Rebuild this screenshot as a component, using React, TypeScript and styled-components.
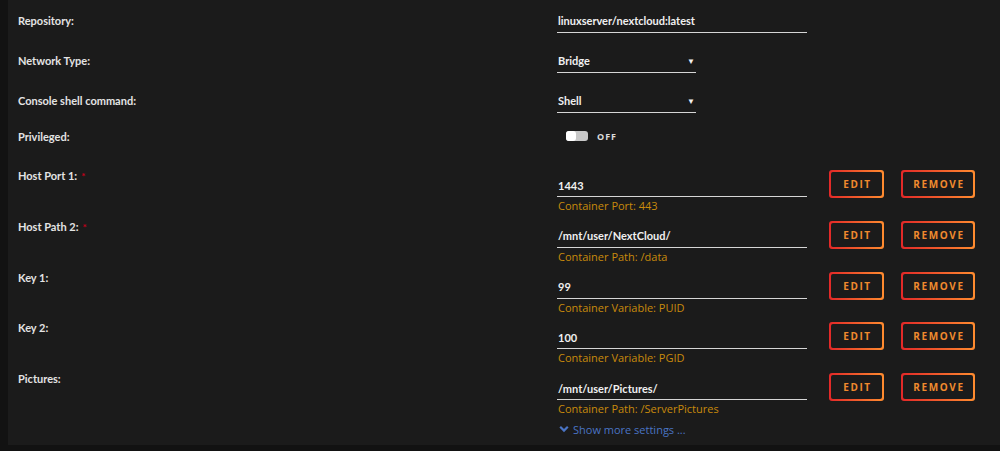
import React from 'react';
import styled, { createGlobalStyle } from 'styled-components';

type ConfigItem = {
  label: string;
  required?: boolean;
  value: string;
  caption: string;
};

const configs: ConfigItem[] = [
  { label: 'Host Port 1:', required: true, value: '1443', caption: 'Container Port: 443' },
  { label: 'Host Path 2:', required: true, value: '/mnt/user/NextCloud/', caption: 'Container Path: /data' },
  { label: 'Key 1:', value: '99', caption: 'Container Variable: PUID' },
  { label: 'Key 2:', value: '100', caption: 'Container Variable: PGID' },
  { label: 'Pictures:', value: '/mnt/user/Pictures/', caption: 'Container Path: /ServerPictures' },
];

const GlobalStyle = createGlobalStyle`
  body {
    margin: 0;
    background: #121212;
    font-family: "Open Sans", "Liberation Sans", sans-serif;
  }
`;

const App: React.FC = () => {
  return (
    <>
      <GlobalStyle />
      <Page>
        <Panel>
          <SimpleRow>
            <Label>Repository:</Label>
            <Field $width={250}>linuxserver/nextcloud:latest</Field>
          </SimpleRow>
          <SimpleRow>
            <Label>Network Type:</Label>
            <Field $width={139}>
              Bridge
              <Caret>▼</Caret>
            </Field>
          </SimpleRow>
          <SimpleRow>
            <Label>Console shell command:</Label>
            <Field $width={139}>
              Shell
              <Caret>▼</Caret>
            </Field>
          </SimpleRow>
          <SwitchRow>
            <Label>Privileged:</Label>
            <SwitchWrap>
              <Track>
                <Knob />
              </Track>
              <SwitchText>OFF</SwitchText>
            </SwitchWrap>
          </SwitchRow>

          <ConfigList>
            {configs.map((c) => (
              <ConfigRow key={c.label}>
                <ConfigLabel>
                  {c.label}
                  {c.required && <Required>*</Required>}
                </ConfigLabel>
                <ConfigBody>
                  <InputBlock>
                    <Field $width={250}>{c.value}</Field>
                    <Caption>{c.caption}</Caption>
                  </InputBlock>
                  <Buttons>
                    <OutlineButton $width={55}>
                      <span>EDIT</span>
                    </OutlineButton>
                    <OutlineButton $width={74}>
                      <span>REMOVE</span>
                    </OutlineButton>
                  </Buttons>
                </ConfigBody>
              </ConfigRow>
            ))}
          </ConfigList>

          <MoreRow>
            <span />
            <MoreLink>
              <svg width="10" height="8" viewBox="0 0 10 8">
                <path d="M1.2 1.8 L5 5.6 L8.8 1.8" fill="none" stroke="#4a74c4" strokeWidth="2.2" />
              </svg>
              Show more settings ...
            </MoreLink>
          </MoreRow>
        </Panel>
      </Page>
    </>
  );
};

export default App;

const Page = styled.div`
  width: 1000px;
  height: 451px;
  padding-left: 8px;
  box-sizing: border-box;
  overflow: hidden;
`;

const Panel = styled.div`
  height: 445px;
  background: #1b1b1b;
  padding-left: 10px;
  box-sizing: border-box;
`;

const SimpleRow = styled.div`
  display: grid;
  grid-template-columns: 539px 1fr;
  align-items: center;
  height: 40px;
`;

const SwitchRow = styled(SimpleRow)`
  height: 36px;
  margin-top: -2px;
`;

const Label = styled.div`
  font-family: Lato, "Open Sans", sans-serif;
  font-size: 11px;
  font-weight: 700;
  color: #e4e4e4;
`;

const Field = styled.div<{ $width: number }>`
  width: ${(p) => p.$width}px;
  height: 24px;
  box-sizing: border-box;
  display: flex;
  align-items: center;
  justify-content: space-between;
  padding-left: 1px;
  padding-top: 1px;
  margin-top: 1px;
  border-bottom: 1px solid #d6d6d6;
  font-family: Lato, "Open Sans", sans-serif;
  font-size: 11px;
  font-weight: 700;
  color: #f0f0f0;
`;

const Caret = styled.span`
  font-size: 8px;
  color: #f0f0f0;
  padding-right: 1px;
`;

const SwitchWrap = styled.div`
  display: flex;
  align-items: center;
  gap: 9px;
  padding-left: 9px;
`;

const Track = styled.div`
  width: 22px;
  height: 10px;
  border-radius: 3px;
  background: #c8c8c8;
  display: flex;
  align-items: center;
`;

const Knob = styled.div`
  width: 10px;
  height: 10px;
  border-radius: 3px;
  background: #ffffff;
`;

const SwitchText = styled.span`
  font-size: 9px;
  font-weight: 700;
  letter-spacing: 1px;
  color: #dcdcdc;
`;

const ConfigList = styled.div`
  padding-top: 10px;
`;

const ConfigRow = styled.div`
  display: grid;
  grid-template-columns: 539px 1fr;
  height: 50.75px;
`;

const ConfigLabel = styled(Label)`
  padding-top: 5px;
`;

const Required = styled.span`
  color: #c2001a;
  margin-left: 4px;
  font-size: 10px;
`;

const ConfigBody = styled.div`
  display: flex;
  align-items: flex-start;
  gap: 22px;
`;

const InputBlock = styled.div`
  display: flex;
  flex-direction: column;
  padding-top: 8px;
`;

const Caption = styled.div`
  font-size: 11px;
  color: #c88a0b;
  padding-left: 1px;
  margin-top: 1px;
`;

const Buttons = styled.div`
  display: flex;
  gap: 17px;
  padding-top: 6px;
`;

const OutlineButton = styled.div<{ $width: number }>`
  width: ${(p) => p.$width}px;
  height: 28px;
  box-sizing: border-box;
  padding: 2px;
  border-radius: 3px;
  background: linear-gradient(90deg, #e22828, #ff8c2f);
  display: flex;

  span {
    flex: 1;
    display: flex;
    align-items: center;
    justify-content: center;
    border-radius: 2px;
    background: #1b1b1b;
    font-size: 10px;
    font-weight: 700;
    letter-spacing: 1.6px;
    padding-left: 2px;
    color: #f08a2e;
  }
`;

const MoreRow = styled.div`
  display: grid;
  grid-template-columns: 539px 1fr;
  padding-top: 4px;
`;

const MoreLink = styled.div`
  display: flex;
  align-items: center;
  gap: 4px;
  padding-left: 2px;
  font-size: 11px;
  color: #4a74c4;
`;
